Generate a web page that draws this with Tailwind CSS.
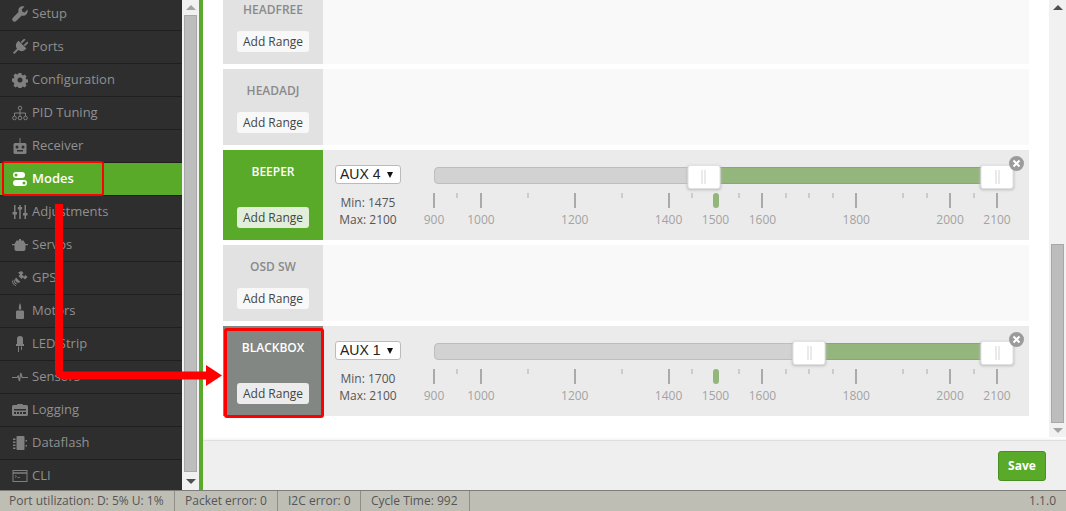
<!DOCTYPE html>
<html lang="en">
<head>
    <meta charset="UTF-8">
    <title>Modes</title>
    <script src="https://cdn.jsdelivr.net/npm/@tailwindcss/browser@4"></script>
</head>
<body class="w-[1066px] h-[511px] overflow-hidden bg-white font-['Open_Sans',sans-serif] relative">

<div class="flex flex-col h-[511px]">
    <div class="flex h-[490px] overflow-hidden">
        <!-- left menu -->
        <nav id="menu" class="w-[182px] shrink-0 bg-[#2e2e2e] -mt-[2px] h-[492px]">
            <a class="flex items-center h-[33px] pl-[12px] gap-[4px] text-[13px] text-[#909090] border-b border-[#1f1f1f]">
                <svg class="w-[16px] h-[16px]" viewBox="0 0 16 16" fill="#808080"><path d="M15.500 3.600l-2.800 2.800-2.300-.7-.7-2.300L12.500.6c-1.800-.6-3.800-.2-5 1-1.200 1.200-1.500 3-1 4.500L.9 11.700c-.9.9-.9 2.400 0 3.300.9.900 2.400.900 3.300 0l5.600-5.600c1.500.5 3.300.2 4.500-1 1.200-1.200 1.700-3 1.200-4.800z"/></svg>
                <span>Setup</span>
            </a>
            <a class="flex items-center h-[33px] pl-[12px] gap-[4px] text-[13px] text-[#909090] border-b border-[#1f1f1f]">
                <svg class="w-[16px] h-[16px]" viewBox="0 0 16 16" fill="#808080"><g transform="rotate(45 8 8)"><path d="M5 -1h1.800v5H5zM9.200 -1H11v5H9.200zM2.500 4.500h11v1.500c0 3-2 5-4.500 5.300V17H7v-5.700C4.500 11 2.500 9 2.500 6z"/></g></svg>
                <span>Ports</span>
            </a>
            <a class="flex items-center h-[33px] pl-[12px] gap-[4px] text-[13px] text-[#909090] border-b border-[#1f1f1f]">
                <svg class="w-[16px] h-[16px]" viewBox="0 0 16 16" fill="#808080"><path fill-rule="evenodd" d="M6.600 1h2.800l.4 1.900 1.200.5 1.600-1 2 2-1 1.600.5 1.200 1.900.4v2.800l-1.900.4-.5 1.200 1 1.600-2 2-1.600-1-1.200.5-.4 1.900H6.600l-.4-1.900-1.200-.5-1.600 1-2-2 1-1.600-.5-1.200L0 9.400V6.600l1.900-.4.5-1.200-1-1.600 2-2 1.600 1 1.200-.5zM8 5.500a2.500 2.500 0 1 0 0 5 2.500 2.500 0 0 0 0-5z"/></svg>
                <span>Configuration</span>
            </a>
            <a class="flex items-center h-[33px] pl-[12px] gap-[4px] text-[13px] text-[#909090] border-b border-[#1f1f1f]">
                <svg class="w-[16px] h-[16px]" viewBox="0 0 16 16" fill="none" stroke="#808080"><circle cx="8" cy="3" r="1.800"/><circle cx="2.500" cy="13" r="1.800"/><circle cx="8" cy="13" r="1.800"/><circle cx="13.500" cy="13" r="1.800"/><path d="M8 5v6M2.500 11V8h11v3"/></svg>
                <span>PID Tuning</span>
            </a>
            <a class="flex items-center h-[33px] pl-[12px] gap-[4px] text-[13px] text-[#909090] border-b border-[#1f1f1f]">
                <svg class="w-[16px] h-[16px]" viewBox="0 0 16 16" fill="#808080"><path fill-rule="evenodd" d="M7.500 0h1v5h4.500a1.500 1.500 0 0 1 1.500 1.500v8a1.500 1.500 0 0 1-1.500 1.500H3a1.500 1.500 0 0 1-1.500-1.500v-8A1.500 1.500 0 0 1 3 5h4.500zM5 7.500a1.500 1.500 0 1 0 0 3 1.500 1.500 0 0 0 0-3zm6 0a1.500 1.500 0 1 0 0 3 1.500 1.500 0 0 0 0-3zM5 12v1.500h6V12z"/></svg>
                <span>Receiver</span>
            </a>
            <a class="flex items-center h-[33px] pl-[12px] gap-[4px] text-[13px] font-semibold text-white bg-[#59aa29] border-b border-[#1f1f1f]">
                <svg class="w-[16px] h-[16px]" viewBox="0 0 16 16" fill="#fff"><path fill-rule="evenodd" d="M4 1h6a3 3 0 0 1 0 6H4a3 3 0 0 1 0-6zm0 1.500a1.500 1.500 0 1 0 0 3 1.500 1.500 0 0 0 0-3zM4 9h8a3 3 0 0 1 0 6H4a3 3 0 0 1 0-6zm8 1.500a1.500 1.500 0 1 0 0 3 1.500 1.500 0 0 0 0-3z"/></svg>
                <span>Modes</span>
            </a>
            <a class="flex items-center h-[33px] pl-[12px] gap-[4px] text-[13px] text-[#909090] border-b border-[#1f1f1f]">
                <svg class="w-[16px] h-[16px]" viewBox="0 0 16 16" fill="#808080"><path d="M2 1h1.500v7H5v2.500H3.500V15H2v-4.500H.5V8H2zM7.250 1h1.500v2H10.200v2.500H8.750V15h-1.500V5.500H5.800V3h1.450zM12.500 1H14v8h1.500v2.500H14V15h-1.500v-3.500H11V9h1.500z"/></svg>
                <span>Adjustments</span>
            </a>
            <a class="flex items-center h-[33px] pl-[12px] gap-[4px] text-[13px] text-[#909090] border-b border-[#1f1f1f]">
                <svg class="w-[16px] h-[16px]" viewBox="0 0 16 16" fill="#808080"><path d="M7 2h2v1.500h2.500L13.500 7H16v1.200h-2.500V12c0 1.200-.8 2-2 2h-7c-1.200 0-2-.8-2-2V8.200H0V7h2.500l2-3.500H7z"/></svg>
                <span>Servos</span>
            </a>
            <a class="flex items-center h-[33px] pl-[12px] gap-[4px] text-[13px] text-[#909090] border-b border-[#1f1f1f]">
                <svg class="w-[16px] h-[16px]" viewBox="0 0 16 16" fill="#808080"><path d="M9.500 1l2 2-1.500 1.500 2 2 1.500-1.500 2 2-2.500 2.500-2-2-1.500 1.500-3-3 1.500-1.500-2-2z"/><path d="M4 7.500l4.500 4.500c-1.500 1-3.400.8-4.500-.3-1.100-1.100-1.200-2.900 0-4.200zM1.800 9.500l.9.300c-.4 1.500.4 3.200 2.100 3.700l-.2.900c-2.300-.6-3.400-2.800-2.800-4.900zM.2 10.500l.9.200c-.4 2 .8 4 3 4.500l-.2.800C1.200 15.400-.4 13 .2 10.500z"/></svg>
                <span>GPS</span>
            </a>
            <a class="flex items-center h-[33px] pl-[12px] gap-[4px] text-[13px] text-[#909090] border-b border-[#1f1f1f]">
                <svg class="w-[16px] h-[16px]" viewBox="0 0 16 16" fill="#808080"><path d="M8 0c.8 1.500 1.200 3 1.200 6.500H6.800C6.800 3 7.200 1.500 8 0zM5.500 7.500h5c1 0 1.500.5 1.500 1.500v5.500c0 1-.5 1.500-1.500 1.500h-5c-1 0-1.500-.5-1.500-1.500V9c0-1 .5-1.500 1.500-1.500z"/></svg>
                <span>Motors</span>
            </a>
            <a class="flex items-center h-[33px] pl-[12px] gap-[4px] text-[13px] text-[#909090] border-b border-[#1f1f1f]">
                <svg class="w-[16px] h-[16px]" viewBox="0 0 16 16" fill="#808080"><path d="M8 0a3 3 0 0 1 3 3v5h1v2H4V8h1V3a3 3 0 0 1 3-3zM6 10.500h1V16H6zM9 10.500h1V14H9z"/></svg>
                <span>LED Strip</span>
            </a>
            <a class="flex items-center h-[33px] pl-[12px] gap-[4px] text-[13px] text-[#909090] border-b border-[#1f1f1f]">
                <svg class="w-[16px] h-[16px]" viewBox="0 0 16 16" fill="none" stroke="#808080" stroke-width="1.200"><path d="M0 8.500h5l1.200-1.500 1.300 5 1.300-8 1.200 4.500h6"/></svg>
                <span>Sensors</span>
            </a>
            <a class="flex items-center h-[33px] pl-[12px] gap-[4px] text-[13px] text-[#909090] border-b border-[#1f1f1f]">
                <svg class="w-[16px] h-[16px]" viewBox="0 0 16 16" fill="#808080"><path fill-rule="evenodd" d="M1.500 3H5l.5-1h5l.5 1h3.500A1.500 1.500 0 0 1 16 4.500v8a1.500 1.500 0 0 1-1.500 1.500h-13A1.500 1.500 0 0 1 0 12.500v-8A1.500 1.500 0 0 1 1.500 3zM2 7v1.500h12V7zm0 3v2h2v-2zm3 0v2h2v-2zm3 0v2h2v-2zm3 0v2h3v-2z"/></svg>
                <span>Logging</span>
            </a>
            <a class="flex items-center h-[33px] pl-[12px] gap-[4px] text-[13px] text-[#909090] border-b border-[#1f1f1f]">
                <svg class="w-[16px] h-[16px]" viewBox="0 0 16 16" fill="#808080"><path d="M5.500 1h6A1 1 0 0 1 12.500 2v12a1 1 0 0 1-1 1h-6a1 1 0 0 1-1-1V2a1 1 0 0 1 1-1zM1 3.500h2.500V5H1zM1 6.500h2.500V8H1zM1 9.500h2.500V11H1zM1 12.500h2.500V14H1zM13.500 5H15v1.500h-1.500zM13.500 10H15v1.500h-1.500z"/></svg>
                <span>Dataflash</span>
            </a>
            <a class="flex items-center h-[33px] pl-[12px] gap-[4px] text-[13px] text-[#909090] border-b border-[#1f1f1f]">
                <svg class="w-[16px] h-[16px]" viewBox="0 0 16 16" fill="none" stroke="#808080"><rect x="1" y="2.500" width="14" height="11"/><path d="M1 5h14" stroke-width="1.500"/><path d="M3 7.500l1.500 1L3 9.500M5.500 9.500H8" stroke-width=".8"/></svg>
                <span>CLI</span>
            </a>
        </nav>

        <!-- menu scrollbar -->
        <div class="w-[17px] shrink-0 bg-[#f1f1f1] flex flex-col items-center">
            <div class="h-[15px] flex items-center justify-center"><div class="w-0 h-0 border-x-[5px] border-x-transparent border-b-[5px] border-b-[#a3a3a3]"></div></div>
            <div class="w-[13px] h-[457px] bg-[#bdbdbd] border border-[#a8a8a8]"></div>
            <div class="flex-1 flex items-center justify-center"><div class="w-0 h-0 border-x-[5px] border-x-transparent border-t-[5px] border-t-[#505050]"></div></div>
        </div>

        <!-- tab content -->
        <main class="flex-1 flex flex-col border-l-4 border-[#59aa29] min-w-0">
            <div class="h-[437px] flex overflow-hidden">
                <div class="flex-1 pl-[20px] pr-[20px] -mt-[12px] flex flex-col gap-[5px]" id="modes"></div>
                <div class="w-[17px] shrink-0 bg-[#f1f1f1] flex flex-col items-center">
                    <div class="h-[15px] w-full flex items-center justify-center"><div class="w-0 h-0 border-x-[5px] border-x-transparent border-b-[5px] border-b-[#505050]"></div></div>
                    <div class="h-[229px]"></div>
                    <div class="w-[13px] h-[179px] bg-[#bdbdbd] border border-[#a8a8a8]"></div>
                    <div class="flex-1 flex items-center justify-center"><div class="w-0 h-0 border-x-[5px] border-x-transparent border-t-[5px] border-t-[#a3a3a3]"></div></div>
                </div>
            </div>
            <div class="h-[3px] bg-gradient-to-b from-[#ffffff] to-[#f4f4f4]"></div>
            <div class="flex-1 bg-[#efefef] border-t border-[#dfdfdf] flex items-center justify-end pr-[20px]">
                <button class="w-[48px] h-[30px] bg-[#59aa29] border border-[#4a8f22] rounded-[3px] text-white text-[12px] font-bold">Save</button>
            </div>
        </main>
    </div>

    <!-- status bar -->
    <footer class="h-[21px] bg-[#bfbeb5] border-t border-[#7d7d79] flex items-center text-[12px] text-[#555]">
        <div class="h-full flex items-center pl-[9px] w-[175px] border-r border-[#8f8f88]">Port utilization: D: 5% U: 1%</div>
        <div class="h-full flex items-center pl-[10px] w-[103px] border-r border-[#8f8f88]">Packet error: 0</div>
        <div class="h-full flex items-center pl-[10px] w-[83px] border-r border-[#8f8f88]">I2C error: 0</div>
        <div class="h-full flex items-center pl-[10px] w-[109px] border-r border-[#8f8f88]">Cycle Time: 992</div>
        <div class="ml-auto pr-[10px]">1.1.0</div>
    </footer>
</div>

<!-- annotations drawn over the screenshot -->
<div class="absolute left-[2px] top-[161px] w-[102px] h-[35px] border-2 border-[#f00] rounded-[3px]"></div>
<div class="absolute left-[224px] top-[328px] w-[100px] h-[90px] border-[3px] border-[#f00] rounded-[3px]"></div>
<svg class="absolute left-0 top-0 pointer-events-none" width="1066" height="511">
    <path d="M59 204V370a5.500 5.500 0 0 0 5.500 5.500H207" fill="none" stroke="#f00" stroke-width="8"/>
    <path d="M206 365L222 375.500L206 386z" fill="#f00"/>
</svg>

<script>
    const pipValues = [900, 950, 1000, 1100, 1200, 1300, 1400, 1450, 1500, 1550, 1600, 1650, 1700, 1750, 1800, 1900, 1950, 2000, 2050, 2100];
    const labelled = [900, 1000, 1200, 1400, 1500, 1600, 1800, 2000, 2100];
    const pos = v => (v - 900) * 563 / 1200;

    function slider(min, max) {
        let pips = '';
        pipValues.forEach(v => {
            if (v === 1500) return;
            const big = labelled.includes(v);
            pips += `<div class="absolute top-[26px] w-[2px] ${big ? 'h-[15px] bg-[#aaaaaa]' : 'h-[5px] bg-[#cccccc]'}" style="left:${pos(v) - 1}px"></div>`;
        });
        labelled.forEach(v => {
            pips += `<div class="absolute top-[45px] -translate-x-1/2 text-[12px] leading-[16px] text-[#a3a3a3]" style="left:${pos(v)}px">${v}</div>`;
        });
        return `<div class="absolute left-[111px] top-[17px] w-[574px] h-[16px]">
            <div class="absolute left-0 top-0 w-[570px] h-[17px] bg-[#d2d2d2] border border-[#bdbdbd] rounded-[4px]"></div>
            <div class="absolute top-0 h-[17px] bg-[#93b67c] border-y border-[#86a872]" style="left:${pos(min)}px;width:${pos(max) - pos(min)}px"></div>
            <div class="absolute top-[26px] -translate-x-1/2 w-[6px] h-[15px] bg-[#93b67c] rounded-[3px]" style="left:${pos(1500)}px"></div>
            ${pips}
            ${handle(pos(min))}${handle(pos(max))}
        </div>
        <div class="absolute left-[686px] top-[6px] w-[15px] h-[15px] rounded-full bg-[#9b9b9b] text-white flex items-center justify-center">
            <svg width="9" height="9" viewBox="0 0 9 9" stroke="#fff" stroke-width="2"><path d="M1.500 1.500l6 6M7.500 1.500l-6 6"/></svg>
        </div>`;
    }

    function handle(x) {
        return `<div class="absolute -top-[2px] w-[33px] h-[24px] -translate-x-1/2 bg-white rounded-[3px] border border-[#e2e2e2] shadow-[0_1px_3px_#bbb] flex items-center justify-center gap-[2px]" style="left:${x}px">
            <div class="w-[1px] h-[14px] bg-[#d6d6d6]"></div><div class="w-[1px] h-[14px] bg-[#d6d6d6]"></div>
        </div>`;
    }

    const modes = [
        { name: 'HEADFREE' },
        { name: 'HEADADJ' },
        { name: 'BEEPER', aux: 'AUX 4', min: 1475, max: 2100, cls: 'bg-[#59aa29] text-white', btn: 'bg-[#e2eed9]' },
        { name: 'OSD SW' },
        { name: 'BLACKBOX', aux: 'AUX 1', min: 1700, max: 2100, cls: 'bg-[#828784] text-white', btn: 'bg-[#ececec]' }
    ];

    document.getElementById('modes').innerHTML = modes.map(m => {
        const right = m.aux ? `<div class="flex-1 relative bg-[#ebebeb]">
            <div class="absolute left-[12px] top-[15px] w-[66px] h-[19px] bg-white border border-[#bbb] rounded-[3px] flex items-center justify-between pl-[4px] pr-[7px] text-[14px] font-['Liberation_Sans',sans-serif] text-[#222]">
                <span>${m.aux}</span><span class="w-0 h-0 border-x-[3.500px] border-x-transparent border-t-[6px] border-t-[#111]"></span>
            </div>
            <div class="absolute left-0 top-[44px] w-[90px] text-center text-[12px] leading-[17px] text-[#555]">Min: ${m.min}<br>Max: ${m.max}</div>
            ${slider(m.min, m.max)}
        </div>` : '<div class="flex-1 bg-[#f9f9f9]"></div>';
        return `<div class="flex shrink-0 ${m.aux ? 'h-[90px]' : 'h-[76px]'}">
            <div class="w-[100px] flex flex-col items-center justify-between pb-[12px] pt-[12px] ${m.cls || 'bg-[#e2e2e2] text-[#8a8a8a]'}">
                <div class="text-[12px] leading-[20px] font-semibold">${m.name}</div>
                <button class="w-[72px] h-[21px] rounded-[3px] text-[12px] text-[#444] ${m.btn || 'bg-[#f8f8f8]'}">Add Range</button>
            </div>
            ${right}
        </div>`;
    }).join('');
</script>
</body>
</html>
